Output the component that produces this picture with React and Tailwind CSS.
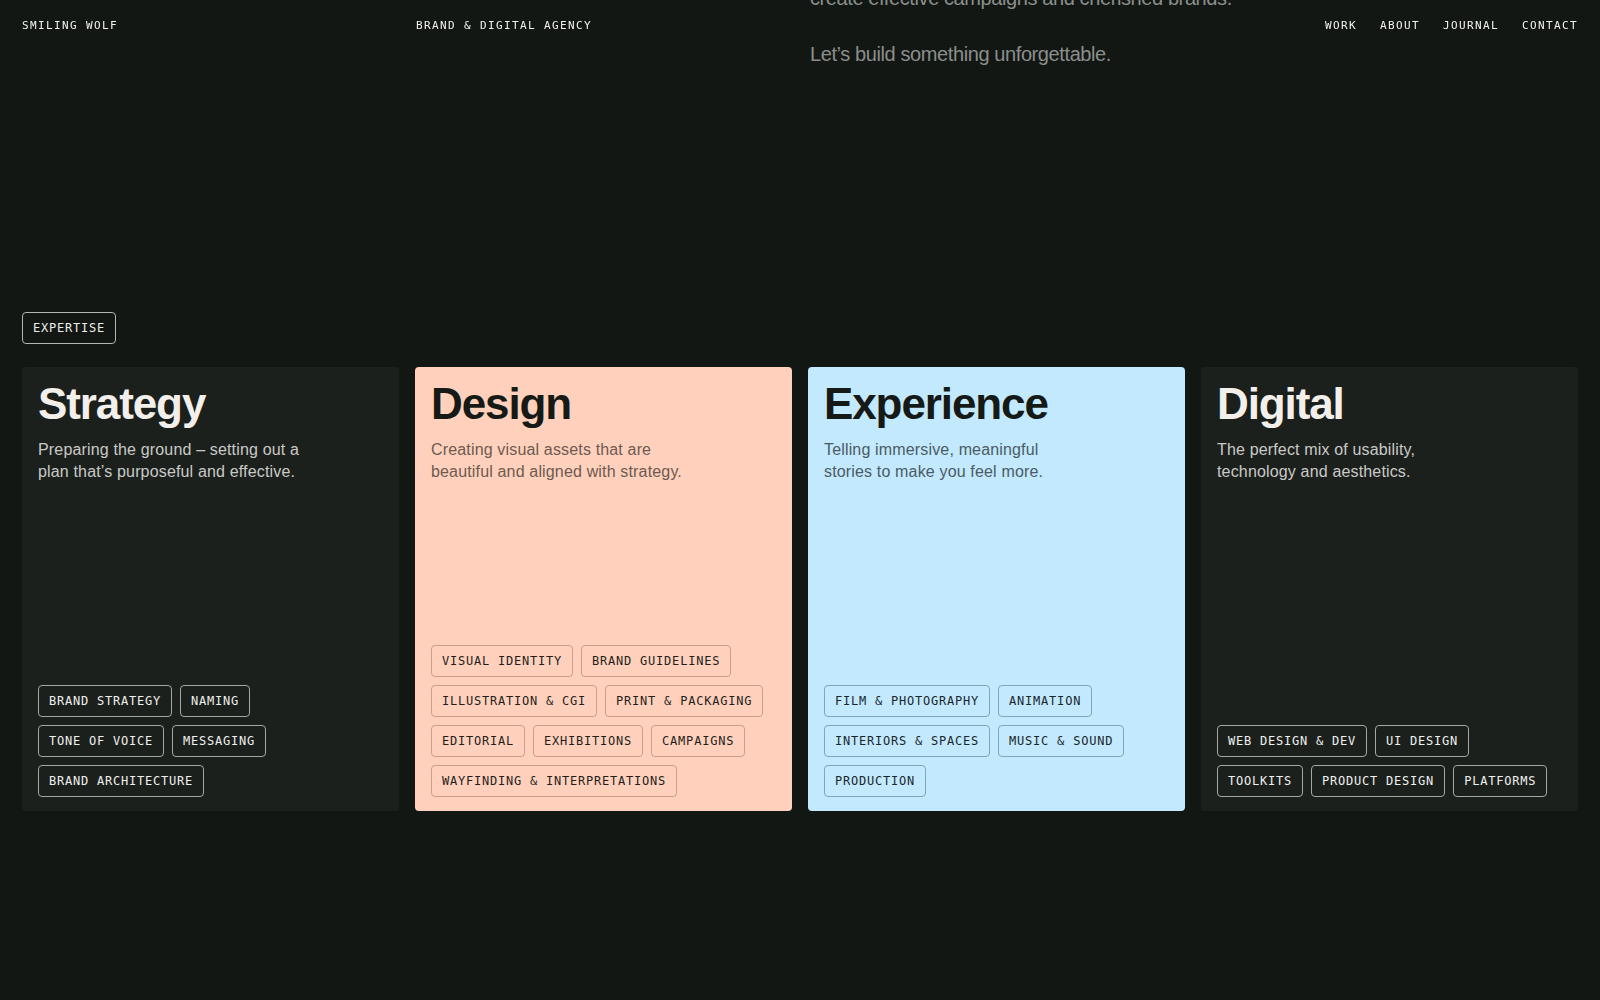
import React from 'react';

const mono = { fontFamily: '"DejaVu Sans Mono", "Liberation Mono", monospace' };

const cards = [
  {
    title: 'Strategy',
    lines: ['Preparing the ground – setting out a', 'plan that’s purposeful and effective.'],
    rows: [['Brand Strategy', 'Naming'], ['Tone of Voice', 'Messaging'], ['Brand Architecture']],
    card: 'bg-[#1c201d]',
    heading: 'text-[#f3f0eb]',
    body: 'text-[#c9cac7]',
    tag: 'border-[#a4a7a3] text-[#f0f0ee]',
  },
  {
    title: 'Design',
    lines: ['Creating visual assets that are', 'beautiful and aligned with strategy.'],
    rows: [
      ['Visual Identity', 'Brand Guidelines'],
      ['Illustration & CGI', 'Print & Packaging'],
      ['Editorial', 'Exhibitions', 'Campaigns'],
      ['Wayfinding & Interpretations'],
    ],
    card: 'bg-[#ffd1bc]',
    heading: 'text-[#161a17]',
    body: 'text-[#6d5a51]',
    tag: 'border-[#c79f90] text-[#241e1b]',
  },
  {
    title: 'Experience',
    lines: ['Telling immersive, meaningful', 'stories to make you feel more.'],
    rows: [['Film & Photography', 'Animation'], ['Interiors & Spaces', 'Music & Sound'], ['Production']],
    card: 'bg-[#c2e9fd]',
    heading: 'text-[#161a17]',
    body: 'text-[#4b5b63]',
    tag: 'border-[#80a6bb] text-[#1a262c]',
  },
  {
    title: 'Digital',
    lines: ['The perfect mix of usability,', 'technology and aesthetics.'],
    rows: [['Web Design & Dev', 'UI Design'], ['Toolkits', 'Product Design', 'Platforms']],
    card: 'bg-[#1c201d]',
    heading: 'text-[#f3f0eb]',
    body: 'text-[#c9cac7]',
    tag: 'border-[#a4a7a3] text-[#f0f0ee]',
  },
];

const Tag = ({ label, className }) => (
  <span
    style={mono}
    className={`h-8 flex items-center px-[10px] border rounded-[4px] text-[12px] tracking-[0.065em] uppercase whitespace-nowrap ${className}`}
  >
    {label}
  </span>
);

const Card = ({ item }) => (
  <div className={`h-[444px] rounded-[4px] pt-[15px] px-4 pb-[14px] flex flex-col justify-between ${item.card}`}>
    <div>
      <h2 className={`text-[44px] leading-[44px] font-bold tracking-[-0.025em] ${item.heading}`}>{item.title}</h2>
      <p className={`mt-[13px] text-[16px] leading-[22px] tracking-[0.01em] ${item.body}`}>
        {item.lines[0]}
        <br />
        {item.lines[1]}
      </p>
    </div>
    <div className="flex flex-col gap-2">
      {item.rows.map((row, i) => (
        <div key={i} className="flex gap-2">
          {row.map((t) => (
            <Tag key={t} label={t} className={item.tag} />
          ))}
        </div>
      ))}
    </div>
  </div>
);

export default function App() {
  return (
    <div
      className="min-h-screen bg-[#121714] overflow-hidden"
      style={{ fontFamily: '"Liberation Sans", Arial, sans-serif' }}
    >
      {/* fixed header over the scrolled page */}
      <header
        style={mono}
        className="fixed top-0 left-0 right-0 z-10 h-[52px] px-[22px] grid grid-cols-4 gap-4 items-center text-[11px] tracking-[0.125em] uppercase text-[#f2f2ef]"
      >
        <span>Smiling Wolf</span>
        <span className="pl-[1px]">Brand &amp; Digital Agency</span>
        <span />
        <nav className="flex justify-end gap-[23px]">
          <a>Work</a>
          <a>About</a>
          <a>Journal</a>
          <a>Contact</a>
        </nav>
      </header>

      <main className="px-[22px]">
        <section className="grid grid-cols-4 gap-4 -mt-[16px]">
          <div className="col-start-3 col-span-2 pl-[2px] text-[20px] leading-[28px] tracking-[-0.02em] text-[#8b8e8b]">
            <p>create effective campaigns and cherished brands.</p>
            <p className="mt-[28px]">Let’s build something unforgettable.</p>
          </div>
        </section>

        <section className="mt-[244px]">
          <span
            style={mono}
            className="inline-flex h-8 items-center px-[10px] border border-[#b3b6b2] rounded-[4px] text-[12px] tracking-[0.065em] uppercase text-[#ecece9]"
          >
            Expertise
          </span>
          <div className="mt-[23px] grid grid-cols-4 gap-4">
            {cards.map((c) => (
              <Card key={c.title} item={c} />
            ))}
          </div>
        </section>
      </main>
    </div>
  );
}
